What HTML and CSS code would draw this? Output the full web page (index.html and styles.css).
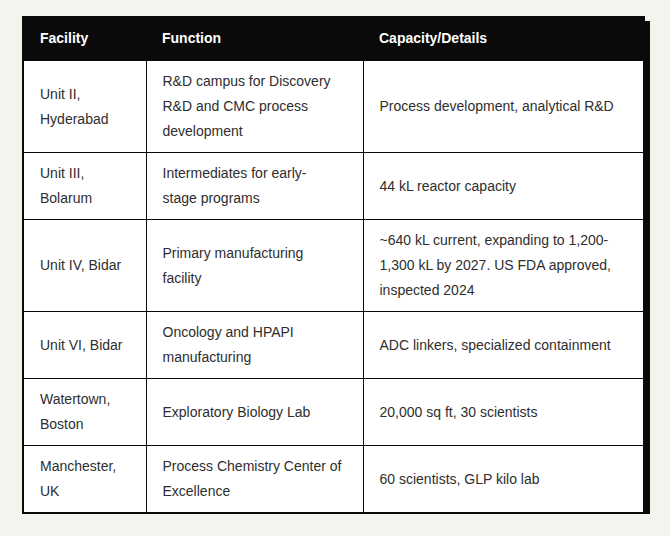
FILE: index.html
```html
<!DOCTYPE html>
<html>
<head>
<meta charset="utf-8">
<link rel="stylesheet" href="styles.css">
</head>
<body>
<div class="wrap">
<table class="facilities">
  <colgroup>
    <col class="c1"><col class="c2"><col class="c3">
  </colgroup>
  <thead>
    <tr><th>Facility</th><th>Function</th><th>Capacity/Details</th></tr>
  </thead>
  <tbody>
    <tr><td>Unit II, Hyderabad</td><td>R&amp;D campus for Discovery R&amp;D and CMC process development</td><td>Process development, analytical R&amp;D</td></tr>
    <tr><td>Unit III, Bolarum</td><td>Intermediates for early-<br>stage programs</td><td>44 kL reactor capacity</td></tr>
    <tr><td>Unit IV, Bidar</td><td>Primary manufacturing<br>facility</td><td>~640 kL current, expanding to 1,200-1,300 kL by 2027. US FDA approved, inspected 2024</td></tr>
    <tr><td>Unit VI, Bidar</td><td>Oncology and HPAPI manufacturing</td><td>ADC linkers, specialized containment</td></tr>
    <tr><td>Watertown, Boston</td><td>Exploratory Biology Lab</td><td>20,000 sq ft, 30 scientists</td></tr>
    <tr><td>Manchester, UK</td><td>Process Chemistry Center of Excellence</td><td>60 scientists, GLP kilo lab</td></tr>
  </tbody>
</table>
</div>
</body>
</html>
```
FILE: styles.css
```css
html, body {
  margin: 0;
  padding: 0;
  background: #f5f3ee;
}
.wrap {
  padding: 16px 0 0 22px;
}
.facilities {
  width: 623px;
  table-layout: fixed;
  border-collapse: collapse;
  background: #fff;
  border: 2px solid #0a0a0a;
  box-shadow: 5px 5px 0 #0a0a0a;
  font-family: "Liberation Sans", Arial, sans-serif;
  font-size: 14px;
  line-height: 25px;
  color: #2e2e2e;
}
.c1 { width: 123px; }
.c2 { width: 217px; }
.c3 { width: auto; }
.facilities th {
  background: #0a0a0a;
  color: #fff;
  font-weight: 700;
  text-align: left;
  padding: 8px 16px 9px;
}
.facilities td {
  padding: 8px 16px;
  border: 1px solid #0a0a0a;
  vertical-align: middle;
}
.facilities tr td:first-child { border-left: none; }
.facilities tr td:last-child { border-right: none; }
```
